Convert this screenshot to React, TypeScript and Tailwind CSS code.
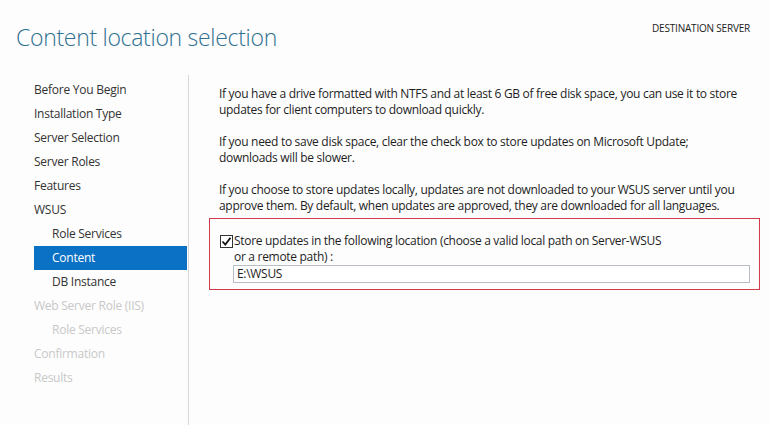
import React from "react";

const font = { fontFamily: '"Open Sans", "Noto Sans", sans-serif' };

type Item = { label: string; indent?: boolean; active?: boolean; disabled?: boolean };

const items: Item[] = [
  { label: "Before You Begin" },
  { label: "Installation Type" },
  { label: "Server Selection" },
  { label: "Server Roles" },
  { label: "Features" },
  { label: "WSUS" },
  { label: "Role Services", indent: true },
  { label: "Content", indent: true, active: true },
  { label: "DB Instance", indent: true },
  { label: "Web Server Role (IIS)", disabled: true },
  { label: "Role Services", indent: true, disabled: true },
  { label: "Confirmation", disabled: true },
  { label: "Results", disabled: true },
];

export default function App() {
  return (
    <div
      className="w-[769px] h-[425px] bg-[#fdfdfd] overflow-hidden flex flex-col font-['Open_Sans','Noto_Sans',sans-serif]"
      style={font}
    >
      <div className="h-[75px] flex justify-between shrink-0">
        <div className="pl-[16px] pt-[21px] text-[23px] leading-[32px] font-light text-[#2f7090] tracking-[-0.3px]">
          Content location selection
        </div>
        <div className="pr-[19px] pt-[21px] text-[10px] leading-[14px] text-[#222] tracking-[-0.2px]">
          DESTINATION SERVER
        </div>
      </div>
      <div className="flex flex-1">
        <div className="w-[189px] border-r border-[#d7d7d7] pl-[34px] pr-[1px] pt-[3px] shrink-0">
          {items.map((it, i) => (
            <div
              key={i}
              className={
                "h-[24px] flex items-center text-[12px] tracking-[-0.25px] " +
                (it.indent ? "pl-[18px] " : "") +
                (it.active
                  ? "bg-[#0a71c4] text-white "
                  : it.disabled
                  ? "text-[#c8c8c8] "
                  : "text-[#333] ")
              }
            >
              {it.label}
            </div>
          ))}
        </div>
        <div className="flex-1 pl-[20px] pr-[9px] pt-[11px] text-[12px] leading-[16px] text-[#1e1e1e] tracking-[-0.3px]">
          <div className="pl-[10px]">
            <p>
              If you have a drive formatted with NTFS and at least 6 GB of free disk space, you can use it to store
              <br />
              updates for client computers to download quickly.
            </p>
            <p className="mt-[16px]">
              If you need to save disk space, clear the check box to store updates on Microsoft Update;
              <br />
              downloads will be slower.
            </p>
            <p className="mt-[16px]">
              If you choose to store updates locally, updates are not downloaded to your WSUS server until you
              <br />
              approve them. By default, when updates are approved, they are downloaded for all languages.
            </p>
          </div>
          <div className="mt-[4px] border border-[#d23a4a] h-[72px] pl-[10px] pr-[9px] pt-[14px]">
            <div className="flex items-center">
              <div className="w-[13px] h-[13px] border border-[#333] bg-white flex items-center justify-center mr-[1px] shrink-0">
                <svg width="11" height="11" viewBox="0 0 11 11">
                  <path d="M1.5 5.5 L4.3 8.5 L9.5 1.8" fill="none" stroke="#111" strokeWidth="1.8" />
                </svg>
              </div>
              <span>Store updates in the following location (choose a valid local path on Server-WSUS</span>
            </div>
            <div className="pl-[14px]">or a remote path) :</div>
            <div className="ml-[13px] h-[18px] border border-[#b9bec6] bg-white pl-[3px] flex items-center text-[12px]">
              E:\WSUS
            </div>
          </div>
        </div>
      </div>
    </div>
  );
}
